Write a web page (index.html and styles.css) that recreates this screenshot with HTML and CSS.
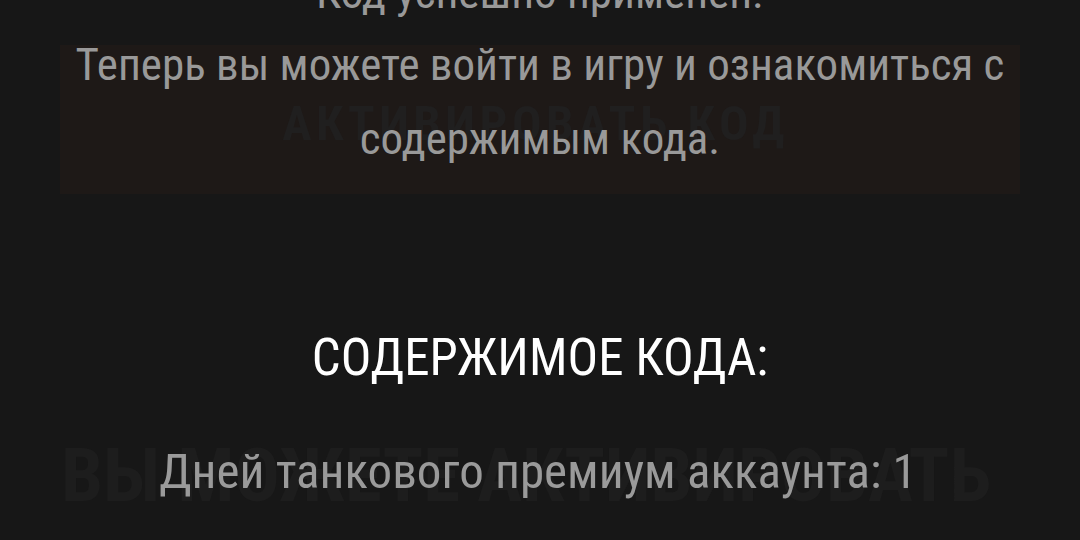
FILE: index.html
```html
<!DOCTYPE html>
<html lang="ru">
<head>
<meta charset="utf-8">
<title>Код успешно применен</title>
<link rel="stylesheet" href="styles.css">
</head>
<body>
<main class="page">
  <h1 class="status">Код успешно применен.</h1>
  <section class="notice">
    <div class="notice-box">
      <span class="watermark watermark-small">АКТИВИРОВАТЬ КОД</span>
    </div>
    <p class="notice-text">Теперь вы можете войти в игру и ознакомиться с содержимым кода.</p>
  </section>
  <h2 class="contents-title">СОДЕРЖИМОЕ КОДА:</h2>
  <section class="contents">
    <span class="watermark watermark-large">ВЫ МОЖЕТЕ АКТИВИРОВАТЬ</span>
    <p class="contents-item">Дней танкового премиум аккаунта: 1</p>
  </section>
</main>
</body>
</html>
```
FILE: styles.css
```css
html, body {
  margin: 0;
  padding: 0;
  background: #171717;
  overflow: hidden;
}

.page {
  margin-top: -44px;
  font-family: Roboto, "Noto Sans", sans-serif;
  font-stretch: condensed;
  text-align: center;
  color: #999999;
}

.status {
  margin: 0;
  font-size: 45px;
  line-height: 74px;
  font-weight: 400;
  color: #999999;
}

.notice {
  margin-top: -2px;
  display: grid;
}

.notice-box,
.notice-text {
  grid-area: 1 / 1;
  align-self: start;
}

.notice-box {
  margin: 17px 60px 0;
  height: 149px;
  box-sizing: border-box;
  padding-top: 54px;
  background: #1e1917;
}

.watermark {
  display: block;
  font-weight: 700;
  white-space: nowrap;
  user-select: none;
}

.watermark-small {
  font-size: 49px;
  line-height: 49px;
  letter-spacing: 4.5px;
  color: #201f1f;
  padding-right: 9px;
}

.notice-text {
  margin: 0 auto;
  width: 960px;
  font-size: 45px;
  line-height: 74px;
}

.contents-title {
  margin: 134px 0 0;
  font-size: 51px;
  line-height: 60px;
  font-weight: 400;
  color: #ffffff;
}

.contents {
  margin-top: 50px;
  display: grid;
}

.contents > * {
  grid-area: 1 / 1;
  align-self: start;
}

.watermark-large {
  font-size: 75px;
  line-height: 75px;
  color: #1d1d1d;
  padding-right: 28px;
}

.contents-item {
  margin: 9px 0 0;
  font-size: 49px;
  line-height: 49px;
  color: #9a9a9a;
  padding-right: 4px;
}
```
